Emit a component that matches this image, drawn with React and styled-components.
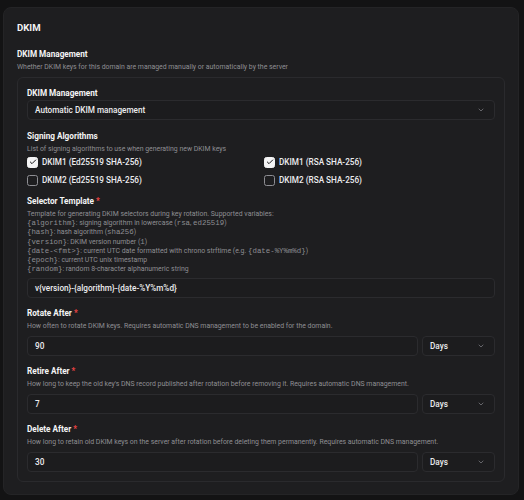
import React from "react";
import styled, { createGlobalStyle } from "styled-components";
import { ChevronDown, Check } from "lucide-react";

const Global = createGlobalStyle`
  html, body { margin: 0; padding: 0; background: #131314; }
  body { font-family: Roboto, "Noto Sans", "Liberation Sans", sans-serif; color: #e4e4e7; }
  * { box-sizing: border-box; }
`;

const Page = styled.div`
  padding: 7px 5px 6px 3px;
  width: 524px;
`;

const Card = styled.section`
  background: #1e1e20;
  border: 1px solid #242426;
  border-radius: 8px;
  padding: 13px 13px 12px;
`;

const Title = styled.h2`
  margin: 0;
  font-size: 9.6px;
  line-height: 14px;
  font-weight: 700;
  color: #f4f4f5;
`;

const Outer = styled.div`
  margin-top: 13px;
`;

const Label = styled.div`
  font-size: 8.2px;
  line-height: 12px;
  font-weight: 700;
  color: #f4f4f5;
`;

const Req = styled.span`
  color: #ef4444;
  margin-left: 2px;
`;

const Desc = styled.div`
  margin-top: ${(p) => p.$mt ?? 2}px;
  font-size: 6.9px;
  line-height: ${(p) => p.$lh ?? 10}px;
  color: #8e8e93;
`;

const Code = styled.code`
  font-family: "Liberation Mono", "DejaVu Sans Mono", monospace;
  font-size: 7.4px;
  color: #8e8e93;
`;

const Inner = styled.div`
  margin-top: 5px;
  border: 1px solid #2a2a2d;
  border-radius: 6px;
  padding: 9px 9px 9px;
  display: flex;
  flex-direction: column;
  gap: 9px;
`;

const Field = styled.div`
  display: flex;
  flex-direction: column;
  margin-top: ${(p) => p.$mt ?? 0}px;
`;

const Control = styled.div`
  margin-top: ${(p) => p.$mt ?? 5}px;
  height: 20px;
  border: 1px solid #2b2b2e;
  border-radius: 4px;
  background: #1c1c1e;
  display: flex;
  align-items: center;
  justify-content: space-between;
  padding: 0 9px 0 7px;
  font-size: 8.2px;
  font-weight: ${(p) => (p.$bold ? 500 : 400)};
  color: #ececef;
  flex: ${(p) => (p.$grow ? 1 : "none")};
  width: ${(p) => (p.$w ? `${p.$w}px` : "auto")};
`;

const Row = styled.div`
  margin-top: 5px;
  display: flex;
  gap: 4px;
  & > div { margin-top: 0; }
`;

const Chev = styled(ChevronDown)`
  color: #8a8a8f;
`;

const Checks = styled.div`
  margin-top: 2px;
  display: grid;
  grid-template-columns: 1fr 1fr;
  column-gap: 6px;
  row-gap: 6px;
`;

const CheckItem = styled.label`
  display: flex;
  align-items: center;
  gap: 4px;
  font-size: 8.2px;
  line-height: 12px;
  font-weight: 500;
  color: #ececef;
`;

const Box = styled.span`
  width: 11px;
  height: 11px;
  border-radius: 2.5px;
  display: inline-flex;
  align-items: center;
  justify-content: center;
  background: ${(p) => (p.$on ? "#f4f4f5" : "transparent")};
  border: 1px solid ${(p) => (p.$on ? "#f4f4f5" : "#8e8e93")};
  color: #18181b;
`;

const Checkbox = ({ on, children }) => (
  <CheckItem>
    <Box $on={on}>{on && <Check size={8} strokeWidth={3} />}</Box>
    {children}
  </CheckItem>
);

const Select = ({ children, w, grow }) => (
  <Control $w={w} $grow={grow} $mt={0} $bold>
    <span>{children}</span>
    <Chev size={8} strokeWidth={2} />
  </Control>
);

const DurationField = ({ label, desc, value }) => (
  <Field>
    <Label>
      {label}
      <Req>*</Req>
    </Label>
    <Desc>{desc}</Desc>
    <Row>
      <Control $grow $bold>
        <span>{value}</span>
      </Control>
      <Select w={73}>Days</Select>
    </Row>
  </Field>
);

export default function App() {
  return (
    <Page>
      <Global />
      <Card>
        <Title>DKIM</Title>
        <Outer>
          <Label>DKIM Management</Label>
          <Desc>Whether DKIM keys for this domain are managed manually or automatically by the server</Desc>
          <Inner>
            <Field>
              <Label>DKIM Management</Label>
              <Control $mt={1} $bold>
                <span>Automatic DKIM management</span>
                <Chev size={8} strokeWidth={2} />
              </Control>
            </Field>

            <Field $mt={1}>
              <Label>Signing Algorithms</Label>
              <Desc>List of signing algorithms to use when generating new DKIM keys</Desc>
              <Checks>
                <Checkbox on>DKIM1 (Ed25519 SHA-256)</Checkbox>
                <Checkbox on>DKIM1 (RSA SHA-256)</Checkbox>
                <Checkbox>DKIM2 (Ed25519 SHA-256)</Checkbox>
                <Checkbox>DKIM2 (RSA SHA-256)</Checkbox>
              </Checks>
            </Field>

            <Field>
              <Label>
                Selector Template<Req>*</Req>
              </Label>
              <Desc $mt={3} $lh={9.2}>
                Template for generating DKIM selectors during key rotation. Supported variables:
                <br />
                <Code>{"{algorithm}"}</Code>: signing algorithm in lowercase (<Code>rsa</Code>, <Code>ed25519</Code>)
                <br />
                <Code>{"{hash}"}</Code>: hash algorithm (<Code>sha256</Code>)
                <br />
                <Code>{"{version}"}</Code>: DKIM version number (<Code>1</Code>)
                <br />
                <Code>{"{date-<fmt>}"}</Code>: current UTC date formatted with chrono strftime (e.g.{" "}
                <Code>{"{date-%Y%m%d}"}</Code>)
                <br />
                <Code>{"{epoch}"}</Code>: current UTC unix timestamp
                <br />
                <Code>{"{random}"}</Code>: random 8-character alphanumeric string
              </Desc>
              <Control $mt={4} $bold>
                <span>{"v{version}-{algorithm}-{date-%Y%m%d}"}</span>
              </Control>
            </Field>

            <DurationField
              label="Rotate After"
              desc="How often to rotate DKIM keys. Requires automatic DNS management to be enabled for the domain."
              value="90"
            />
            <DurationField
              label="Retire After"
              desc="How long to keep the old key's DNS record published after rotation before removing it. Requires automatic DNS management."
              value="7"
            />
            <DurationField
              label="Delete After"
              desc="How long to retain old DKIM keys on the server after rotation before deleting them permanently. Requires automatic DNS management."
              value="30"
            />
          </Inner>
        </Outer>
      </Card>
    </Page>
  );
}
